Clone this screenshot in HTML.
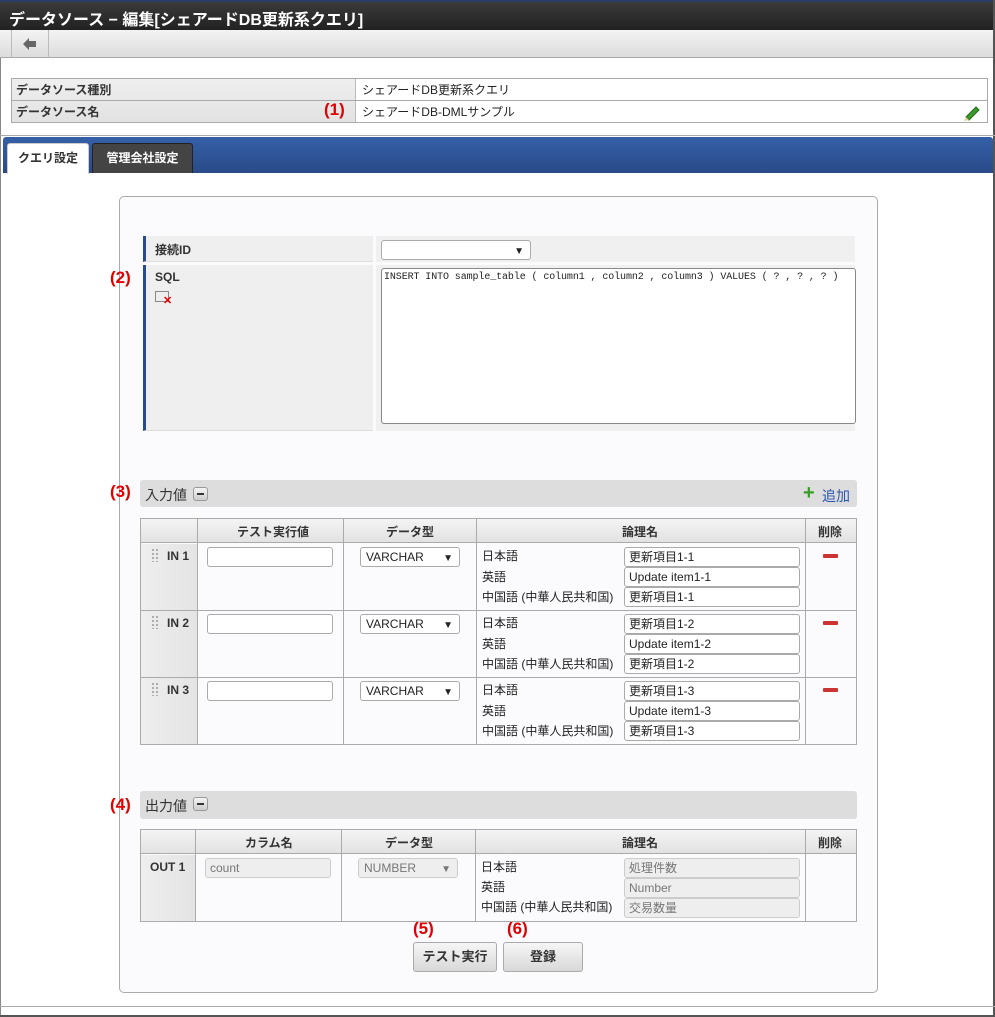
<!DOCTYPE html>
<html><head><meta charset="utf-8"><style>
*{box-sizing:border-box;margin:0;padding:0}
body{width:995px;height:1017px;position:relative;background:#fff;font-family:"Liberation Sans","Noto Sans CJK JP",sans-serif;font-size:12px;color:#222;overflow:hidden}
.a{position:absolute}
.red{color:#e00000;font-weight:bold;font-size:17px}
.th{background:linear-gradient(#f4f4f4,#e2e2e2);font-weight:bold;text-align:center;color:#333}
.inp{position:absolute;border:1px solid #aaa;border-radius:3px;background:#fff;height:20px;font-size:12px;padding:2px 4px;line-height:15px}
.sel{position:absolute;border:1px solid #aaa;border-radius:3px;background:#fff;height:20px;font-size:12px;padding:2px 5px;line-height:15px}
.sel:after{content:"▼";position:absolute;right:6px;top:3px;font-size:10px}
.dis{background:#eee;color:#777;border-color:#ccc}
.minus{position:absolute;width:15px;height:14px;border:1px solid #999;border-radius:3px;background:linear-gradient(#f5f5f5,#ccc)}
.minus:after{content:"";position:absolute;left:3px;top:5px;width:7px;height:2px;background:#333}
.btn{position:absolute;border:1px solid #aaa;border-radius:3px;background:linear-gradient(#f6f6f6,#d8d8d8);font-weight:bold;font-size:13px;text-align:center;line-height:28px;color:#333}
.grip{position:absolute;width:8px;height:14px;background-image:radial-gradient(circle,#aaa 1px,transparent 1.3px);background-size:4px 4px}
</style></head><body>
<div class="a" style="left:0;top:0;width:995px;height:30px;background:linear-gradient(#3a3a3a,#222);border-top:2px solid #2b3f66"></div>
<div class="a" style="left:9px;top:6px;color:#fff;font-weight:bold;font-size:16px">データソース − 編集[シェアードDB更新系クエリ]</div>
<div class="a" style="left:0;top:30px;width:995px;height:28px;background:linear-gradient(#f3f3f3,#dcdcdc);border-bottom:1px solid #aaa"></div>
<div class="a" style="left:11px;top:30px;width:38px;height:28px;border-left:1px solid #bbb;border-right:1px solid #bbb"></div>
<svg class="a" style="left:22px;top:37px" width="16" height="14" viewBox="0 0 16 14"><path d="M1 7 L7 1 L7 4 L14 4 L14 10 L7 10 L7 13 Z" fill="#666"/></svg>
<div class="a" style="left:0;top:58px;width:1px;height:959px;background:#888"></div>
<div class="a" style="left:993px;top:0;width:2px;height:1017px;background:#555"></div>
<div class="a" style="left:11px;top:78px;width:977px;height:45px;border:1px solid #aaa"></div>
<div class="a" style="left:12px;top:79px;width:344px;height:43px;background:linear-gradient(#efefef,#e2e2e2);border-right:1px solid #bbb"></div>
<div class="a" style="left:12px;top:100px;width:976px;height:1px;background:#aaa"></div>
<div class="a" style="left:16px;top:81px;font-weight:bold;color:#333">データソース種別</div>
<div class="a" style="left:16px;top:103px;font-weight:bold;color:#333">データソース名</div>
<div class="a red" style="left:324px;top:100px">(1)</div>
<div class="a" style="left:362px;top:81px">シェアードDB更新系クエリ</div>
<div class="a" style="left:362px;top:103px">シェアードDB-DMLサンプル</div>
<svg class="a" style="left:963px;top:104px" width="18" height="18" viewBox="0 0 18 18"><path d="M3 13 L13 3 L16 6 L6 16 Z" fill="#3a9a2a" stroke="#1f6d18"/><path d="M3 13 L6 16 L1 17 Z" fill="#e8d0a0"/></svg>
<div class="a" style="left:0;top:135px;width:995px;height:1px;background:#aaa"></div>
<div class="a" style="left:3px;top:137px;width:990px;height:36px;background:linear-gradient(#3560a8,#2a4a88);border-radius:3px 3px 0 0"></div>
<div class="a" style="left:7px;top:143px;width:82px;height:31px;background:#fff;border:1px solid #ccc;border-bottom:none;border-radius:3px 3px 0 0;text-align:center;line-height:29px;font-weight:bold;color:#333">クエリ設定</div>
<div class="a" style="left:92px;top:143px;width:101px;height:30px;background:#444;border:1px solid #222;border-bottom:none;border-radius:3px 3px 0 0;text-align:center;line-height:29px;font-weight:bold;color:#fff">管理会社設定</div>
<div class="a" style="left:119px;top:196px;width:759px;height:797px;border:1px solid #aaa;border-radius:5px;background:#fbfbfe"></div>
<div class="a" style="left:143px;top:236px;width:230px;height:26px;background:#efefef;border-left:3px solid #2a4a88;border-bottom:1px solid #ddd"></div>
<div class="a" style="left:376px;top:236px;width:479px;height:26px;background:#f0f0f0"></div>
<div class="a" style="left:155px;top:241px;font-weight:bold;color:#333">接続ID</div>
<div class="sel" style="left:381px;top:240px;width:150px"></div>
<div class="a" style="left:143px;top:265px;width:230px;height:166px;background:#efefef;border-left:3px solid #2a4a88;border-bottom:1px solid #ddd"></div>
<div class="a" style="left:376px;top:265px;width:479px;height:166px;background:#f0f0f0"></div>
<div class="a" style="left:155px;top:270px;font-weight:bold;color:#333">SQL</div>
<div class="a" style="left:155px;top:291px;width:14px;height:11px;border:1px solid #888;background:#eee"></div>
<div class="a" style="left:163px;top:294px;color:#e00;font-size:11px;font-weight:bold">✕</div>
<div class="a red" style="left:110px;top:268px">(2)</div>
<div class="a" style="left:381px;top:268px;width:475px;height:156px;background:#fff;border:1px solid #888;border-radius:3px;padding:3px 2px;font-family:'Liberation Mono',monospace;font-size:10px;letter-spacing:-0.1px;white-space:nowrap;overflow:hidden">INSERT INTO sample_table ( column1 , column2 , column3 ) VALUES ( ? , ? , ? )</div>
<div class="a red" style="left:110px;top:482px">(3)</div>
<div class="a" style="left:140px;top:480px;width:717px;height:27px;background:#ddd;border-radius:3px"></div>
<div class="a" style="left:145px;top:485px;font-size:14px;color:#333">入力値</div>
<div class="minus" style="left:193px;top:487px"></div>
<div class="a" style="left:803px;top:483px;color:#3a9a2a;font-size:20px;font-weight:bold;line-height:20px">+</div>
<div class="a" style="left:822px;top:486px;color:#2a55b0;font-size:14px">追加</div>
<div class="a" style="left:140px;top:518px;width:717px;height:227px;border:1px solid #aaa"></div>
<div class="a th" style="left:141px;top:519px;width:715px;height:24px;border-bottom:1px solid #aaa"></div>
<div class="a" style="left:197px;top:519px;width:1px;height:225px;background:#aaa"></div>
<div class="a" style="left:343px;top:519px;width:1px;height:225px;background:#aaa"></div>
<div class="a" style="left:476px;top:519px;width:1px;height:225px;background:#aaa"></div>
<div class="a" style="left:805px;top:519px;width:1px;height:225px;background:#aaa"></div>
<div class="a" style="left:237px;top:523px;font-weight:bold;color:#333">テスト実行値</div>
<div class="a" style="left:386px;top:523px;font-weight:bold;color:#333">データ型</div>
<div class="a" style="left:622px;top:523px;font-weight:bold;color:#333">論理名</div>
<div class="a" style="left:818px;top:523px;font-weight:bold;color:#333">削除</div>
<div class="a" style="left:141px;top:544px;width:56px;height:200px;background:linear-gradient(90deg,#eee,#e4e4e4)"></div>
<div class="a" style="left:141px;top:610px;width:715px;height:1px;background:#aaa"></div>
<div class="a" style="left:141px;top:677px;width:715px;height:1px;background:#aaa"></div>

<div class="grip" style="left:151px;top:548px"></div>
<div class="a" style="left:167px;top:549px;font-weight:bold;color:#333">IN 1</div>
<div class="inp" style="left:207px;top:547px;width:126px"></div>
<div class="sel" style="left:360px;top:547px;width:100px">VARCHAR</div>
<div class="a" style="left:482px;top:546px;line-height:20.5px">日本語<br>英語<br>中国語 (中華人民共和国)</div>
<div class="inp" style="left:624px;top:547px;width:176px">更新項目1-1</div>
<div class="inp" style="left:624px;top:567px;width:176px">Update item1-1</div>
<div class="inp" style="left:624px;top:587px;width:176px">更新項目1-1</div>
<div class="a" style="left:823px;top:554px;width:15px;height:4px;background:#c33;border-radius:1px"></div>

<div class="grip" style="left:151px;top:615px"></div>
<div class="a" style="left:167px;top:616px;font-weight:bold;color:#333">IN 2</div>
<div class="inp" style="left:207px;top:614px;width:126px"></div>
<div class="sel" style="left:360px;top:614px;width:100px">VARCHAR</div>
<div class="a" style="left:482px;top:613px;line-height:20.5px">日本語<br>英語<br>中国語 (中華人民共和国)</div>
<div class="inp" style="left:624px;top:614px;width:176px">更新項目1-2</div>
<div class="inp" style="left:624px;top:634px;width:176px">Update item1-2</div>
<div class="inp" style="left:624px;top:654px;width:176px">更新項目1-2</div>
<div class="a" style="left:823px;top:621px;width:15px;height:4px;background:#c33;border-radius:1px"></div>

<div class="grip" style="left:151px;top:682px"></div>
<div class="a" style="left:167px;top:683px;font-weight:bold;color:#333">IN 3</div>
<div class="inp" style="left:207px;top:681px;width:126px"></div>
<div class="sel" style="left:360px;top:681px;width:100px">VARCHAR</div>
<div class="a" style="left:482px;top:680px;line-height:20.5px">日本語<br>英語<br>中国語 (中華人民共和国)</div>
<div class="inp" style="left:624px;top:681px;width:176px">更新項目1-3</div>
<div class="inp" style="left:624px;top:701px;width:176px">Update item1-3</div>
<div class="inp" style="left:624px;top:721px;width:176px">更新項目1-3</div>
<div class="a" style="left:823px;top:688px;width:15px;height:4px;background:#c33;border-radius:1px"></div>

<div class="a red" style="left:110px;top:795px">(4)</div>
<div class="a" style="left:140px;top:791px;width:717px;height:28px;background:#ddd;border-radius:3px"></div>
<div class="a" style="left:145px;top:796px;font-size:14px;color:#333">出力値</div>
<div class="minus" style="left:193px;top:797px"></div>
<div class="a" style="left:140px;top:829px;width:717px;height:93px;border:1px solid #aaa"></div>
<div class="a th" style="left:141px;top:830px;width:715px;height:24px;border-bottom:1px solid #aaa"></div>
<div class="a" style="left:141px;top:855px;width:54px;height:66px;background:linear-gradient(90deg,#eee,#e4e4e4)"></div>
<div class="a" style="left:195px;top:830px;width:1px;height:91px;background:#aaa"></div>
<div class="a" style="left:341px;top:830px;width:1px;height:91px;background:#aaa"></div>
<div class="a" style="left:475px;top:830px;width:1px;height:91px;background:#aaa"></div>
<div class="a" style="left:805px;top:830px;width:1px;height:91px;background:#aaa"></div>
<div class="a" style="left:245px;top:834px;font-weight:bold;color:#333">カラム名</div>
<div class="a" style="left:385px;top:834px;font-weight:bold;color:#333">データ型</div>
<div class="a" style="left:622px;top:834px;font-weight:bold;color:#333">論理名</div>
<div class="a" style="left:818px;top:834px;font-weight:bold;color:#333">削除</div>
<div class="a" style="left:150px;top:860px;font-weight:bold;color:#333">OUT 1</div>
<div class="inp dis" style="left:205px;top:858px;width:126px">count</div>
<div class="sel dis" style="left:358px;top:858px;width:100px">NUMBER</div>
<div class="a" style="left:481px;top:857px;line-height:20px">日本語<br>英語<br>中国語 (中華人民共和国)</div>
<div class="inp dis" style="left:624px;top:858px;width:176px">処理件数</div>
<div class="inp dis" style="left:624px;top:878px;width:176px">Number</div>
<div class="inp dis" style="left:624px;top:898px;width:176px">交易数量</div>
<div class="a red" style="left:413px;top:919px">(5)</div>
<div class="a red" style="left:507px;top:919px">(6)</div>
<div class="btn" style="left:413px;top:942px;width:84px;height:30px">テスト実行</div>
<div class="btn" style="left:503px;top:942px;width:80px;height:30px">登録</div>
<div class="a" style="left:0;top:1006px;width:995px;height:1px;background:#aaa"></div>
<div class="a" style="left:0;top:1015px;width:995px;height:2px;background:#555"></div>
</body></html>
